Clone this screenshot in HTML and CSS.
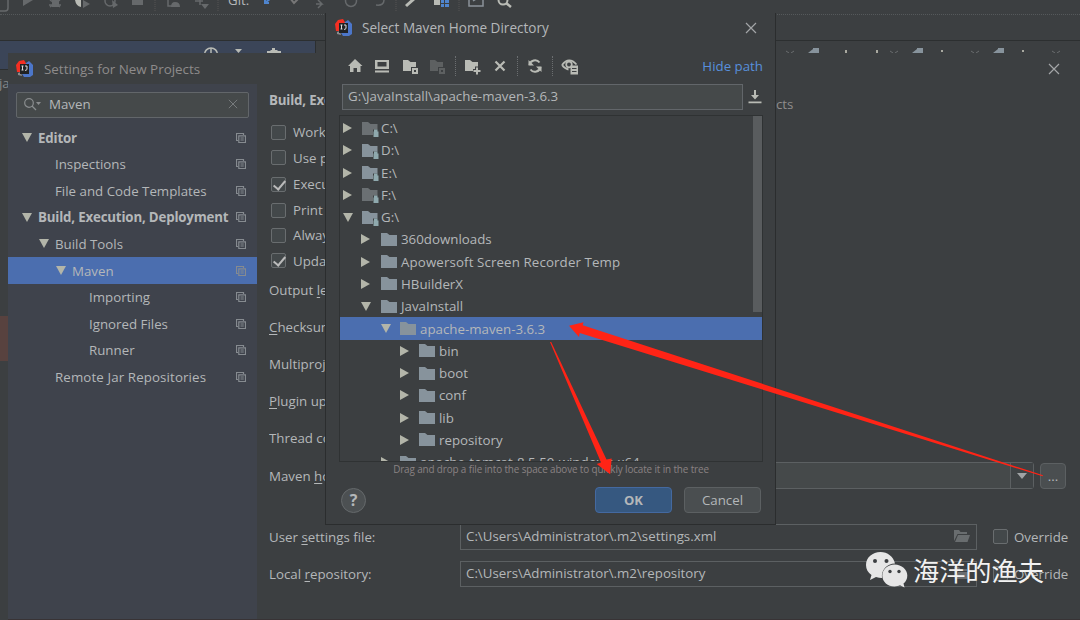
FILE: index.html
```html
<!DOCTYPE html>
<html lang="en">
<head>
<meta charset="utf-8">
<title>Settings for New Projects</title>
<link rel="stylesheet" href="styles.css">
</head>
<body>
<svg class="defs" width="0" height="0" aria-hidden="true">
  <symbol id="down" viewBox="0 0 10 9"><path d="M0 0H10L5 9Z"/></symbol>
  <symbol id="right" viewBox="0 0 9 10"><path d="M0 0L9 5L0 10Z"/></symbol>
  <symbol id="folder" viewBox="0 0 16 13"><path d="M0 0H6L8.500 2H16V13H0Z"/></symbol>
  <symbol id="drive" viewBox="0 0 17 15"><path d="M0 0H6L8.500 2H15.500V7.500H11V13H0Z"/><path class="lock" d="M11.500 9.500H12V7.500H15.500V9.500H16.500V15H11.500Z"/></symbol>
  <symbol id="copy" viewBox="0 0 10 10"><path d="M7.500 2V.5H.5V7.500H2M2.800 2.800H9.500V9.500H2.800ZM4.500 5H7.800M4.500 7H7.800" fill="none" stroke="currentColor" stroke-width="1.200"/></symbol>
  <symbol id="close" viewBox="0 0 12 12"><path d="M1 1L11 11M11 1L1 11" fill="none" stroke="currentColor" stroke-width="1.200"/></symbol>
  <symbol id="open" viewBox="0 0 16 12"><path d="M0 11V0H5L6.500 2H13V4H3.500Z"/><path d="M4 5H16L13.500 12H1Z"/></symbol>
  <symbol id="logo" viewBox="0 0 18 18"><path fill="#f52f22" d="M1 12L0 5L3 1L8 0L11 5L5 12Z"/><path fill="#4c76c9" d="M10 3L13 1L17 5V15L14 17H8L6 14Z"/><path fill="#8b8b8d" d="M2 13L5 12L6 16L2 15Z"/><path fill="#202224" d="M4 4H13V14H4Z"/><path d="M5.500 6H7.500M6.500 6V10M5.500 10H7.500M9 6H11V9.500L10 10.300H9" fill="none" stroke="#ddd"/></symbol>
</svg>

<main class="desktop">
  <div class="ide-toolbar">
    <svg width="530" height="14" viewBox="0 0 530 14">
      <g fill="none" stroke="#66696b" stroke-width="1.500"><path d="M-4 11H5Q8 11 8 8V0"/><path d="M49 5L61 5M50 0L60 7M60 0L50 7"/><circle cx="110" cy="1" r="5"/><path d="M168 0V6H177M200 -2V5M195 1H203"/><circle cx="351" cy="1" r="5.500"/><path d="M376 5Q384 6 384 0M316 4H322L318 0M322 4L318 8"/></g>
      <g fill="#66696b"><path d="M23 0H33L23 6ZM52 0H59V7H52ZM83 0L90 4L83 8ZM112 0L118 5L113 8ZM132 0H143V5H132ZM171 7Q171 2 175 2Q180 2 180 7ZM201 4H209L205 9Z"/></g>
      <path fill="#b9bbb5" d="M75 0H81V7Q76 6 75 0ZM434 0H440V5H434Z"/>
      <path d="M406 6L415 -2" stroke="#b9bbb5" stroke-width="3"/>
      <path d="M265 -1V3H269M271 -2L265 3" fill="none" stroke="#4f85ce" stroke-width="2"/>
      <path d="M290 -2L294 3L299 -2" fill="none" stroke="#777" stroke-width="2"/>
      <path fill="#4f85ce" d="M441 0H444V3H441ZM445 0H449V3H445ZM441 4H444V7H441ZM445 4H449V7H445Z"/>
      <path d="M469 -1V6H483V-1M473 1L476 -1" fill="none" stroke="#8a9299" stroke-width="1.500"/>
      <circle cx="503" cy="0" r="4.500" fill="none" stroke="#b9bbb5" stroke-width="2"/><path d="M506 3L511 7" stroke="#b9bbb5" stroke-width="2.500"/>
      <path d="M155 0V11M218 0V11M396 0V11M459 0V11" stroke="#555" stroke-dasharray="1 1"/>
    </svg>
    <span class="git">Git:</span>
  </div>
  <div class="ide-nav"></div>
  <div class="ide-panel">
    <div class="panel-head">
      <svg width="80" height="13" viewBox="0 0 80 13"><g fill="none" stroke="#b9bbb5" stroke-width="1.500"><circle cx="9" cy="13.500" r="6.500"/><path d="M9 7V13"/></g><path fill="#b9bbb5" d="M33 8H40L36.500 12ZM65 13V10H68L69 9H70V7H73V9H75L76 10H79V13Z"/></svg>
    </div>
    <div class="tabs">
      <svg width="290" height="13" viewBox="0 0 290 13"><path fill="#87939c" d="M23 12L28 8V12ZM28 7H34V12H28ZM127 12L132 8V12ZM132 7H138V12H132ZM208 12L213 8V12ZM213 7H219V12H213Z"/><path fill="#a9a9a0" d="M60 9H62V13H60ZM91 9H93V13H91ZM156 9H158V11H156ZM237 9H239V11H237Z"/><path d="M1 10L4 12M9 10L6 12M105 10L108 12M113 10L110 12M186 10L189 12M194 10L191 12M267 10L270 12M275 10L272 12" stroke="#6a6d6f"/></svg>
    </div>
  </div>
  <div class="ide-gutter"><span>ja</span><i></i></div>

  <section class="settings">
    <header class="settings-title"><svg class="logo"><use href="#logo"/></svg><h1>Settings for New Projects</h1><svg class="x"><use href="#close"/></svg></header>
    <div class="settings-body">
      <aside>
        <div class="search"><svg width="18" height="14" viewBox="0 0 18 14"><g fill="none" stroke="#8a8d8f" stroke-width="1.200"><circle cx="5" cy="6" r="4.300"/><path d="M8 9L12 13"/></g><path fill="#8a8d8f" d="M12 5H17L14.500 8Z"/></svg><span>Maven</span><svg class="clear"><use href="#close"/></svg></div>
        <ul class="nav">
          <li class="l0"><svg class="tri"><use href="#down"/></svg><b>Editor</b><svg class="copy"><use href="#copy"/></svg></li>
          <li class="l1"><span>Inspections</span><svg class="copy"><use href="#copy"/></svg></li>
          <li class="l1"><span>File and Code Templates</span><svg class="copy"><use href="#copy"/></svg></li>
          <li class="l0"><svg class="tri"><use href="#down"/></svg><b>Build, Execution, Deployment</b><svg class="copy"><use href="#copy"/></svg></li>
          <li class="l1g"><svg class="tri"><use href="#down"/></svg><span>Build Tools</span><svg class="copy"><use href="#copy"/></svg></li>
          <li class="l2g on"><svg class="tri"><use href="#down"/></svg><span>Maven</span><svg class="copy"><use href="#copy"/></svg></li>
          <li class="l3"><span>Importing</span><svg class="copy"><use href="#copy"/></svg></li>
          <li class="l3"><span>Ignored Files</span><svg class="copy"><use href="#copy"/></svg></li>
          <li class="l3"><span>Runner</span><svg class="copy"><use href="#copy"/></svg></li>
          <li class="l1 wide"><span>Remote Jar Repositories</span><svg class="copy"><use href="#copy"/></svg></li>
        </ul>
      </aside>
      <div class="page">
        <div class="crumbs"><b>Build, Exe</b><span>cts</span></div>
        <div class="checks">
          <label><i></i>Work</label>
          <label><i></i>Use p</label>
          <label><i class="ck"></i>Execu</label>
          <label><i></i>Print</label>
          <label><i></i>Alway</label>
          <label><i class="ck"></i>Upda</label>
        </div>
        <div class="form">
          <div class="cut">Output <u>l</u>evel:</div>
          <div class="cut"><u>C</u>hecksum</div>
          <div class="cut">Multiproje</div>
          <div class="cut"><u>P</u>lugin upd</div>
          <div class="cut">Thread cou</div>
          <div class="home"><span class="cut">Maven <u>h</u>om</span><div class="combo"><em><svg viewBox="0 0 10 6"><path d="M0 0H10L5 6Z"/></svg></em></div><button class="dots">...</button></div>
        </div>
        <div class="paths">
          <span>User <u>s</u>ettings file:</span><div class="field">C:\Users\Administrator\.m2\settings.xml<svg><use href="#open"/></svg></div><label><i></i>Override</label>
          <span>Local <u>r</u>epository:</span><div class="field">C:\Users\Administrator\.m2\repository<svg><use href="#open"/></svg></div><label><i></i>Override</label>
        </div>
      </div>
    </div>
  </section>

  <section class="dialog">
    <header><svg class="logo"><use href="#logo"/></svg><h2>Select Maven Home Directory</h2><svg class="x"><use href="#close"/></svg></header>
    <div class="tools">
      <svg viewBox="0 0 18 18"><path d="M9 2L16.500 9H14.500V15H11V11H7.500V15H4V9H2Z"/></svg>
      <svg viewBox="0 0 18 18"><path d="M2 3H16V12H2ZM4.500 5V9.500H13.500V5ZM2 13.500H16V15.500H2Z" fill-rule="evenodd"/></svg>
      <svg class="shift" viewBox="0 0 18 18"><path d="M1 3H6L8.500 5H14V10H9V14H1ZM10 11H16V17H10ZM12 13V15H14V13Z" fill-rule="evenodd"/></svg>
      <svg class="dim" viewBox="0 0 18 18"><path d="M1 3H6L8.500 5H14V10H9V14H1ZM10 11H16V17H10ZM12 13V15H14V13Z" fill-rule="evenodd"/></svg>
      <hr>
      <svg viewBox="0 0 18 18"><path d="M1 3H6L8.500 5H14V9.500H11V12H9V14H1ZM12 10.500H14V13H16.500V15H14V17.500H12V15H9.500V13H12Z"/></svg>
      <svg viewBox="0 0 18 18"><path d="M4.500 4.500L13.500 13.500M13.500 4.500L4.500 13.500" fill="none" stroke="#b9bbb5" stroke-width="2.200"/></svg>
      <hr>
      <svg viewBox="0 0 18 18"><path d="M3.500 8A5.600 5.600 0 0 1 13.500 5.500M14.500 10A5.600 5.600 0 0 1 4.500 12.500" fill="none" stroke="#b9bbb5" stroke-width="2"/><path d="M2.500 3V8.500H8ZM15.500 15V9.500H10Z"/></svg>
      <hr>
      <svg viewBox="0 0 18 18"><path d="M1 8Q8 -1 15.500 7.500M1 8Q4 12 7.500 12.500" fill="none" stroke="#b9bbb5" stroke-width="1.800"/><circle cx="8" cy="7.500" r="2.800" fill="none" stroke="#b9bbb5" stroke-width="1.700"/><path d="M9.500 8.500H17V17.500H9.500ZM11 11V12H15.500V11ZM11 14V15H15.500V14Z" fill-rule="evenodd"/></svg>
      <a>Hide path</a>
    </div>
    <div class="pathrow"><div class="path">G:\JavaInstall\apache-maven-3.6.3</div><svg width="14" height="14" viewBox="0 0 14 14"><path d="M6 0H8V5H11L7 9.500L3 5H6ZM.5 11.500H13.500V13.200H.5Z"/></svg></div>
    <div class="treebox">
      <ul class="tree">
        <li class="d0"><svg class="rt"><use href="#right"/></svg><svg class="dr gray"><use href="#drive"/></svg>C:\</li>
        <li class="d0"><svg class="rt"><use href="#right"/></svg><svg class="dr"><use href="#drive"/></svg>D:\</li>
        <li class="d0"><svg class="rt"><use href="#right"/></svg><svg class="dr"><use href="#drive"/></svg>E:\</li>
        <li class="d0"><svg class="rt"><use href="#right"/></svg><svg class="dr gray"><use href="#drive"/></svg>F:\</li>
        <li class="d0"><svg class="tri"><use href="#down"/></svg><svg class="dr"><use href="#drive"/></svg>G:\</li>
        <li class="d1"><svg class="rt"><use href="#right"/></svg><svg class="fo"><use href="#folder"/></svg>360downloads</li>
        <li class="d1 wide"><svg class="rt"><use href="#right"/></svg><svg class="fo"><use href="#folder"/></svg>Apowersoft Screen Recorder Temp</li>
        <li class="d1"><svg class="rt"><use href="#right"/></svg><svg class="fo"><use href="#folder"/></svg>HBuilderX</li>
        <li class="d1"><svg class="tri"><use href="#down"/></svg><svg class="fo"><use href="#folder"/></svg>JavaInstall</li>
        <li class="d2 on"><svg class="tri"><use href="#down"/></svg><svg class="fo"><use href="#folder"/></svg>apache-maven-3.6.3</li>
        <li class="d3"><svg class="rt"><use href="#right"/></svg><svg class="fo"><use href="#folder"/></svg>bin</li>
        <li class="d3"><svg class="rt"><use href="#right"/></svg><svg class="fo"><use href="#folder"/></svg>boot</li>
        <li class="d3"><svg class="rt"><use href="#right"/></svg><svg class="fo"><use href="#folder"/></svg>conf</li>
        <li class="d3"><svg class="rt"><use href="#right"/></svg><svg class="fo"><use href="#folder"/></svg>lib</li>
        <li class="d3"><svg class="rt"><use href="#right"/></svg><svg class="fo"><use href="#folder"/></svg>repository</li>
        <li class="d2"><svg class="rt"><use href="#right"/></svg><svg class="fo"><use href="#folder"/></svg>apache-tomcat-8.5.59-windows-x64</li>
      </ul>
      <div class="thumb"></div>
    </div>
    <p class="hint">Drag and drop a file into the space above to quickly locate it in the tree</p>
    <footer><span class="help">?</span><button class="ok">OK</button><button>Cancel</button></footer>
  </section>

  <svg class="arrows" width="1080" height="620" viewBox="0 0 1080 620">
    <path d="M569 325.700L583.500 322.300L582.700 325.200L1043 475.300L1042.500 476.300L579.700 333L579 337Z"/>
    <path d="M550 342L551.200 342L606.500 459.500L611.700 458.500L610.200 474.200L596.700 464L601 462.500Z"/>
  </svg>
  <div class="watermark">
    <svg width="42" height="37" viewBox="0 0 42 37"><path fill="#e6e6e6" d="M14.500 0C6.500 0 0 5.500 0 13C0 17.500 2 20.500 5.500 23L4 28L10 25C12 25.700 14 26 16 26C15 18 21 11.500 29 11.500C27.500 4.500 21.500 0 14.500 0Z"/><path fill="#e6e6e6" d="M28.500 12.500C21.500 12.500 16.300 17.500 16.300 23.500C16.300 30 21.800 34.500 28.500 34.500C30.500 34.500 32.500 34 34 33.300L38.500 35.500L37.500 31.500C40 29.500 41.300 27 41.300 23.500C41.300 17.500 35.800 12.500 28.500 12.500Z"/><g fill="#3c3f41"><circle cx="9" cy="9" r="2"/><circle cx="20.500" cy="9" r="2"/><circle cx="24" cy="19.500" r="1.700"/><circle cx="33" cy="19.500" r="1.700"/></g></svg>
    <span>海洋的渔夫</span>
  </div>
</main>
</body>
</html>
```
FILE: styles.css
```css
* { box-sizing: border-box; }
body { margin: 0; background: #3c3f41; color: #b4b7b9; font: 13.3px/20px "Open Sans", "Noto Sans", sans-serif; }
ul, p, h1, h2 { margin: 0; padding: 0; list-style: none; font-weight: 400; }
svg { display: block; flex: none; fill: currentColor; }
.defs { position: absolute; }
b { font-weight: 700; letter-spacing: -.18px; }
u { text-underline-offset: 2px; }
button { font: inherit; color: inherit; padding: 0; border: 1px solid #5c6062; border-radius: 4px; background: #4a4e50; }
.desktop { position: relative; width: 1080px; height: 620px; overflow: hidden; }

.ide-toolbar { display: flex; height: 15px; border-bottom: 1px dotted #55595b; overflow: hidden; }
.git { margin: -10px 0 0 -302px; }
.ide-nav { height: 26px; border-bottom: 1px solid #2c2f30; }
.ide-panel { display: flex; justify-content: space-between; height: 28px; }
.panel-head { width: 316px; padding-left: 202px; background: #3b4558; border-right: 1px solid #2c2f30; }
.tabs { width: 295px; }
.ide-gutter { width: 8px; height: 551px; border-top: 1px solid #2c2f30; overflow: hidden; }
.ide-gutter span { display: block; margin: 3px 0 0 -1px; color: #85888a; }
.ide-gutter i { display: block; height: 45px; margin-top: 223px; background: #58423f; }

.logo { width: 18px; height: 18px; }
.x { width: 12px; height: 12px; margin-left: auto; color: #a3a5a7; }
.tri { width: 10px; height: 9px; color: #b3b5a9; }
.rt { width: 9px; height: 10px; color: #b3b5a9; }

.settings { position: absolute; left: 8px; top: 53px; width: 1072px; height: 567px; background: #3c3f41; border-bottom: 1px solid #383335; }
.settings-title { display: flex; align-items: center; height: 31px; padding: 0 20px 0 8px; }
.settings-title h1 { margin-left: 10px; font-size: 13.400px; color: #8e8b8b; }
.settings-body { display: flex; height: 535px; }
aside { width: 249px; background: #3f434c; }
.search { display: flex; align-items: center; height: 26px; width: 233px; margin: 8px 8px 6.500px; padding: 0 10px 2px 7px; border: 1px solid #62666a; border-radius: 2px; background: #45494a; }
.search span { margin-left: 7px; }
.clear { width: 10px; height: 10px; margin-left: auto; color: #777b7d; }
.nav li { display: flex; align-items: center; height: 26.550px; padding-right: 11px; }
.nav b, .nav li span { margin-left: 6px; white-space: nowrap; }
.nav .copy { width: 10px; height: 10px; margin-left: auto; color: #868b90; }
.l0 { padding-left: 14px; }
.l1 { padding-left: 41px; }
.l1g { padding-left: 31px; }
.l2g { padding-left: 48px; }
.l3 { padding-left: 75px; }
.wide { letter-spacing: .12px; }
.on { background: #4b6eaf; }

.page { flex: 1; min-width: 0; padding-left: 12px; }
.crumbs { display: flex; height: 35.500px; padding-top: 6px; }
.crumbs b { width: 56px; overflow: hidden; white-space: nowrap; }
.crumbs span { margin: 4px 0 0 451px; color: #8e8b8b; }
.checks { display: grid; grid-template-rows: 25px 26px 27px 25px 25px 26px; width: 56px; padding-left: 2px; overflow: hidden; }
label { display: flex; align-items: center; white-space: nowrap; }
label i { position: relative; flex: none; width: 15px; height: 15px; margin-right: 7px; border: 1px solid #696d6f; border-radius: 2px; background: #43484a; }
.ck::after { content: ""; position: absolute; left: 4px; top: 0; width: 5px; height: 10px; border: solid #bbb; border-width: 0 2px 2px 0; transform: rotate(40deg); }
.form { display: grid; grid-template-rows: repeat(5, 37.200px) 38px; align-items: center; margin-top: -2.500px; }
.cut { width: 56px; overflow: hidden; white-space: nowrap; }
.home { display: flex; align-items: center; }
.combo { display: flex; justify-content: flex-end; width: 574px; height: 27px; margin-left: 135px; border: 1px solid #5c6062; border-radius: 3px; background: #45494a; }
.combo em { display: flex; align-items: center; justify-content: center; width: 23px; border-left: 1px solid #5c6062; background: #3f4345; }
.combo svg { width: 10px; height: 6px; color: #a0a3a5; }
.dots { width: 26px; height: 26px; margin-left: 6px; }
.paths { display: grid; grid-template-columns: 191px 517px 1fr; grid-template-rows: 26px 26px; row-gap: 11px; align-items: center; padding-top: 29px; }
.field { display: flex; align-items: center; justify-content: space-between; height: 26px; padding: 0 6px 2px 5px; border: 1px solid #5c6062; }
.field svg { width: 16px; height: 12px; color: #696d6f; }
.paths label { padding-left: 16px; }
.paths label i { margin-right: 6px; }

.dialog { position: absolute; left: 325px; top: 13px; width: 451px; height: 512px; padding: 0 12px 0 13px; background: #3c3f41; border: 1px solid #2b2d2e; border-top: 0; }
.dialog header { display: flex; align-items: center; height: 31px; margin: 0 6px 0 -4px; padding-bottom: 2px; }
.dialog h2 { margin-left: 9px; font-size: 13.550px; }
.tools { display: flex; align-items: center; height: 40px; padding: 3px 0 0 7px; color: #b9bbb5; }
.tools svg { width: 18px; height: 18px; margin-right: 9px; }
.tools .shift { margin-left: 2px; }
.tools hr { height: 20px; width: 1px; margin: 0 8px 0 -1px; border: 0; border-left: 1px dotted #6b6e70; }
.tools .dim { color: #5d6061; }
.tools hr ~ hr + svg { margin-left: 0; }
.tools a { margin-left: auto; color: #5890dc; }
.pathrow { display: flex; align-items: center; gap: 5px; height: 26px; padding-left: 3px; color: #b9bbb5; }
.path { width: 401px; height: 26px; padding: 0 5px; line-height: 23px; border: 1px solid #62666a; background: #45494a; color: #b4b7b9; }
.treebox { display: flex; justify-content: space-between; width: 424px; height: 347px; margin-top: 5px; padding-top: 1px; border: 1px solid #2f3233; overflow: hidden; position: relative; }
.tree { width: 422px; }
.tree li { display: flex; align-items: center; height: 22.270px; white-space: nowrap; }
.fo { width: 16px; height: 13px; margin: 0 4px 0 11px; color: #87939c; }
.tri + .fo { margin-left: 10px; }
.dr { width: 17px; height: 15px; margin: 2px 2px 0 10px; color: #87939c; }
.tri + .dr { margin-left: 9px; }
.gray { color: #6b7073; }
.lock { fill: #8fa9ae; }
.gray .lock { fill: #858989; }
.d0 { padding-left: 3px; }
.d1 { padding-left: 21px; }
.d2 { padding-left: 41px; }
.d3 { padding-left: 60px; }
.d2 .fo, .d3 .fo { margin-left: 10px; }
.d2 .tri + .fo { margin-left: 9px; }
.thumb { position: absolute; right: 0; top: 0; width: 9px; height: 196px; background: #595c5e; }
.hint { height: 15px; line-height: 14px; text-align: center; font-size: 9.900px; letter-spacing: -.12px; color: #8a8283; white-space: nowrap; }
.dialog footer { display: flex; align-items: center; gap: 12px; height: 26px; margin: 10px 2px 0 2px; }
.help { width: 25px; height: 25px; margin-right: auto; border: 1px solid #65696b; border-radius: 50%; background: #4c5052; text-align: center; line-height: 23px; font-size: 16px; font-weight: 700; }
footer button { width: 77px; height: 26px; }
footer .ok { background: #365880; border-color: #4469a0; font-weight: 700; font-size: 13px; }

.arrows { position: absolute; left: 0; top: 0; fill: #ff2416; }
.watermark { position: absolute; left: 866px; top: 552px; display: flex; gap: 5px; color: #f2f2f2; font: 26.200px/36px "Noto Sans CJK SC", sans-serif; white-space: nowrap; }
```
